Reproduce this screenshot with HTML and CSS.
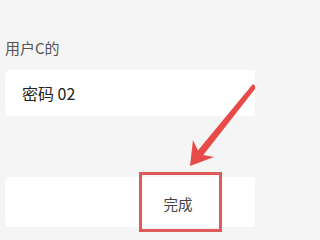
FILE: index.html
```html
<!DOCTYPE html>
<html lang="zh">
<head>
<meta charset="utf-8">
<link rel="stylesheet" href="styles.css">
</head>
<body>
<div class="page">
  <div class="label">用户C的</div>
  <div class="card field">密码 02</div>
  <div class="card action">
    <span class="done">完成</span>
    <div class="highlight"></div>
  </div>
</div>
<svg class="arrow" width="255" height="235" viewBox="0 0 255 235">
  <polygon points="190,166 214,157 203.3,154.9 256.6,87 252.9,84 197.9,150.5 193,140" fill="#e84a4a"/>
</svg>
</body>
</html>
```
FILE: styles.css
```css
html, body {
  margin: 0;
  padding: 0;
  width: 255px;
  height: 235px;
  overflow: hidden;
  background: #f5f5f5;
  font-family: "Noto Sans CJK SC", "Noto Sans", sans-serif;
}
.page {
  padding: 38px 0 0 5px;
}
.label {
  font-size: 15px;
  line-height: 20px;
  color: #555;
  margin-bottom: 12px;
}
.card {
  background: #fff;
  border-radius: 5px 0 0 5px;
  display: flex;
  align-items: center;
}
.field {
  height: 46px;
  padding-left: 17px;
  font-size: 16px;
  color: #222;
}
.action {
  position: relative;
  margin-top: 61px;
  height: 50px;
  padding-left: 96px;
  justify-content: center;
  font-size: 14.5px;
  color: #444;
}
.done {
  position: relative;
  top: 1px;
}
.highlight {
  position: absolute;
  left: 134px;
  top: -5px;
  width: 77px;
  height: 54px;
  border: 3px solid #e05a5a;
}
.arrow {
  position: absolute;
  left: 0;
  top: 0;
}
```
